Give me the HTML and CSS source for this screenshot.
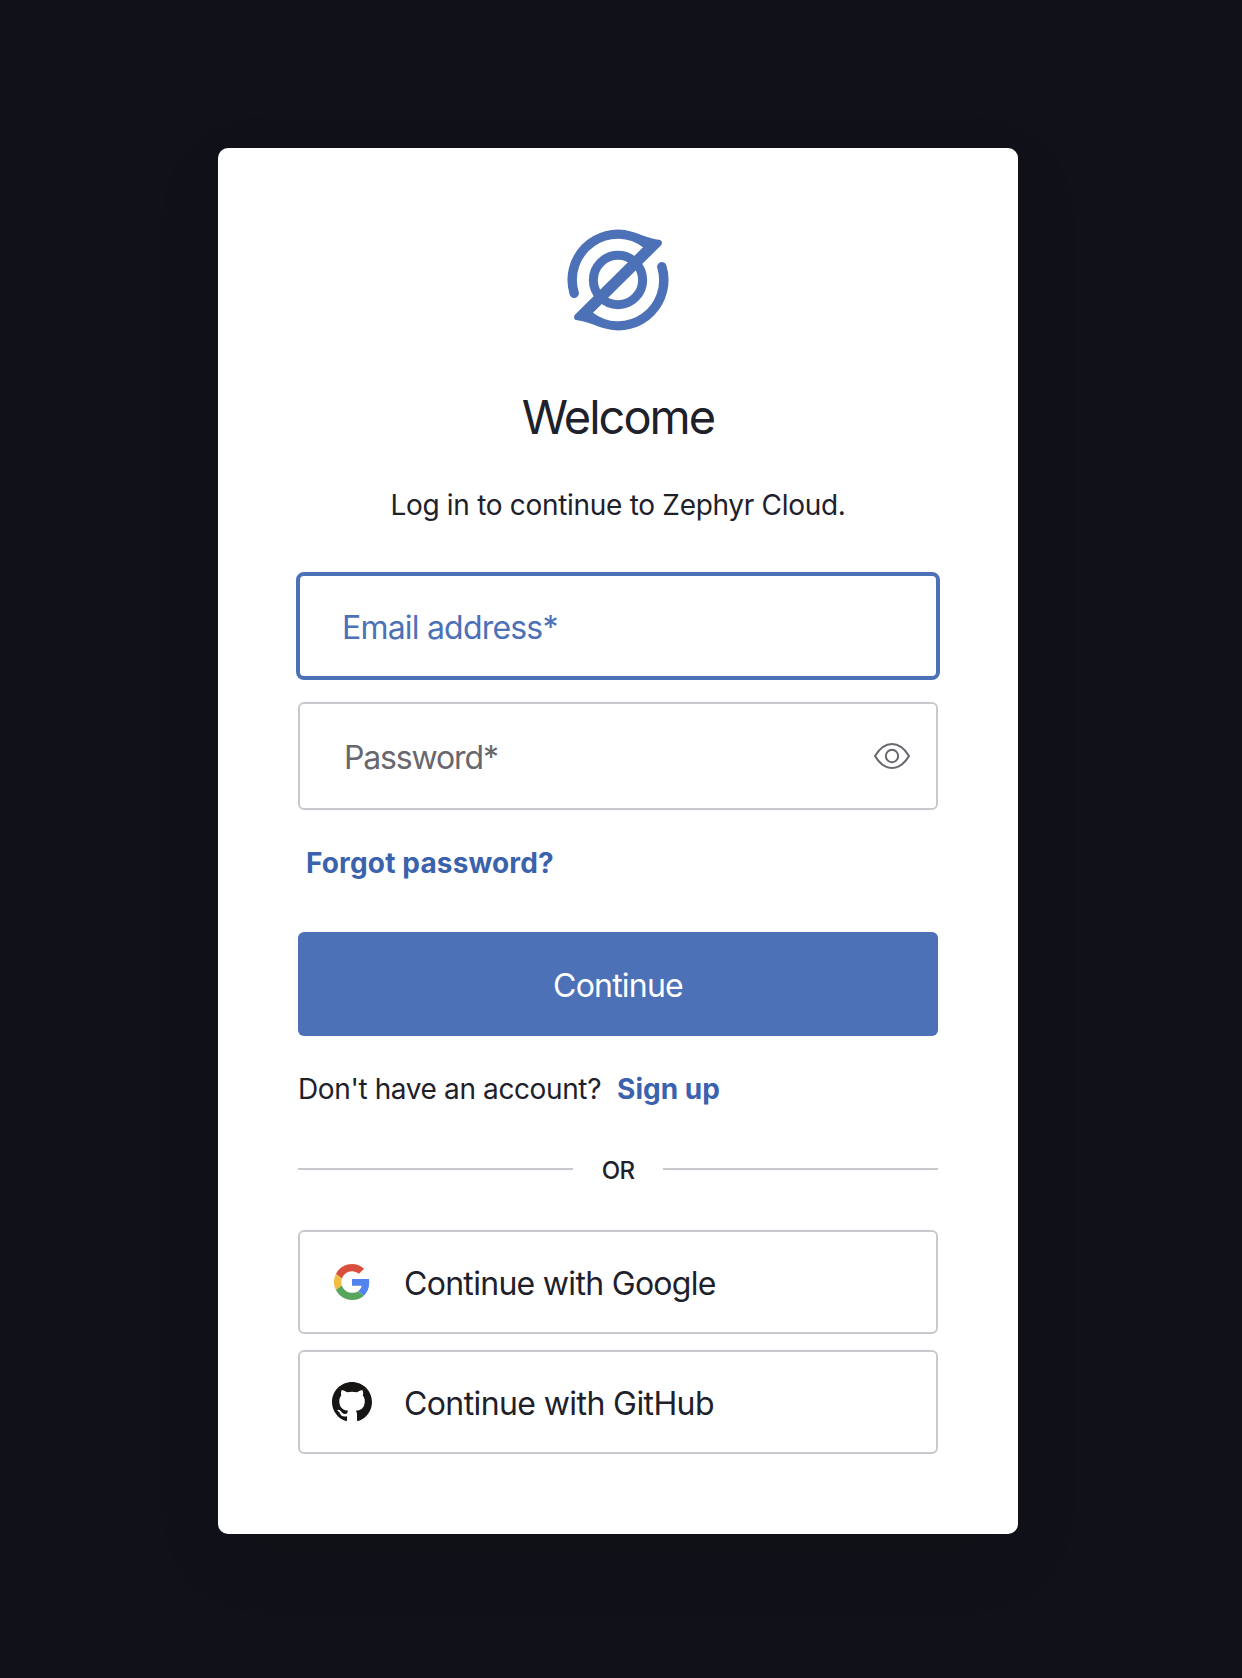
FILE: index.html
```html
<!DOCTYPE html>
<html lang="en">
<head>
<meta charset="utf-8">
<title>Log in | Zephyr Cloud</title>
<link rel="stylesheet" href="styles.css">
</head>
<body>
<main class="card">
  <svg class="logo" viewBox="54 54 312 312" aria-hidden="true">
    <circle cx="210" cy="210" r="74" fill="none" stroke="currentColor" stroke-width="27"/>
    <path fill="currentColor" d="M92 245A123 123 0 0 1 285 112L80 315Q74 329 88 331C125 337 140 347 168 355A151 151 0 0 0 355 166A13.5 13.5 0 0 0 328 175A123 123 0 0 1 135 308L340 105Q346 91 332 89C295 83 280 73 252 65A151 151 0 0 0 65 254A13.5 13.5 0 0 0 92 245Z"/>
  </svg>
  <h1 class="title">Welcome</h1>
  <p class="subtitle">Log in to continue to Zephyr Cloud.</p>
  <div class="field field-focus"><span class="label email-label">Email address*</span></div>
  <div class="field">
    <span class="label password-label">Password*</span>
    <svg class="eye" viewBox="102 156 108 84" aria-hidden="true">
      <g fill="none" stroke="currentColor" stroke-width="6" stroke-linejoin="round">
        <path d="M105 198C120 173 138 162 156 162S192 173 207 198C192 223 174 234 156 234S120 223 105 198Z"/>
        <circle cx="156" cy="198" r="18.5"/>
      </g>
    </svg>
  </div>
  <a class="link forgot">Forgot password?</a>
  <button class="submit"><span>Continue</span></button>
  <p class="signup"><span class="question">Don't have an account?</span><a class="link">Sign up</a></p>
  <div class="divider"><span class="or">OR</span></div>
  <button class="social">
    <svg class="google" viewBox="0 0 48 48" aria-hidden="true">
      <path fill="#d94f3d" d="M24 9.5c3.54 0 6.71 1.22 9.21 3.6l6.85-6.85C35.9 2.38 30.47 0 24 0 14.62 0 6.51 5.38 2.56 13.22l7.98 6.19C12.43 13.72 17.74 9.5 24 9.5z"/>
      <path fill="#5383ec" d="M46.98 24.55c0-1.57-.15-3.09-.38-4.55H24v9.02h12.94c-.58 2.96-2.26 5.48-4.78 7.18l7.73 6c4.51-4.18 7.09-10.36 7.09-17.65z"/>
      <path fill="#f2bd42" d="M10.53 28.59A14.5 14.5 0 0 1 10.53 19.41L2.56 13.22A23.9 23.9 0 0 0 2.56 34.78l7.97-6.19z"/>
      <path fill="#58a55c" d="M24 48c6.48 0 11.93-2.13 15.89-5.81l-7.73-6c-2.15 1.45-4.92 2.3-8.16 2.3-6.26 0-11.57-4.22-13.47-9.91l-7.98 6.19C6.51 42.62 14.62 48 24 48z"/>
    </svg>
    <span class="label">Continue with Google</span>
  </button>
  <button class="social">
    <svg class="github" viewBox="0 0 16 16" aria-hidden="true">
      <path fill="#161514" d="M8 0C3.58 0 0 3.58 0 8c0 3.54 2.29 6.53 5.47 7.59.4.07.55-.17.55-.38 0-.19-.01-.82-.01-1.49-2.01.37-2.53-.49-2.69-.94-.09-.23-.48-.94-.82-1.13-.28-.15-.68-.52-.01-.53.63-.01 1.08.58 1.23.82.72 1.21 1.87.87 2.33.66.07-.52.28-.87.51-1.07-1.78-.2-3.64-.89-3.64-3.95 0-.87.31-1.59.82-2.15-.08-.2-.36-1.02.08-2.12 0 0 .67-.21 2.2.82a7.6 7.6 0 0 1 4 0c1.53-1.04 2.2-.82 2.2-.82.44 1.1.16 1.92.08 2.12.51.56.82 1.27.82 2.15 0 3.07-1.87 3.75-3.65 3.95.29.25.54.73.54 1.48 0 1.07-.01 1.93-.01 2.2 0 .21.15.46.55.38A8.01 8.01 0 0 0 16 8c0-4.42-3.58-8-8-8z"/>
    </svg>
    <span class="label github-label">Continue with GitHub</span>
  </button>
</main>
</body>
</html>
```
FILE: styles.css
```css
* { box-sizing: border-box; }
body {
  margin: 0;
  min-height: 1678px;
  padding: 148px 224px 0 218px;
  background: #111219;
  color: #1e212a;
  font-family: Inter, "Liberation Sans", sans-serif;
}
.card {
  display: flex;
  flex-direction: column;
  width: 800px;
  height: 1386px;
  padding: 80px;
  background: #fff;
  border-radius: 10px;
  box-shadow: 0 24px 72px rgba(0, 0, 0, .08);
}
.logo { width: 104px; height: 104px; align-self: center; color: #4c71b7; }
.title {
  margin: 56px 0 0;
  font-size: 47px;
  font-weight: 400;
  line-height: 58px;
  text-align: center;
  letter-spacing: -2px;
}
.subtitle {
  margin: 38px 0 46px;
  font-size: 28px;
  line-height: 42px;
  text-align: center;
  letter-spacing: -.3px;
}
.field {
  display: flex;
  align-items: center;
  justify-content: space-between;
  height: 108px;
  padding: 0 26px 0 44px;
  border: 2px solid #c9c8ce;
  border-radius: 6px;
  color: #68676e;
  font-size: 32px;
}
.field-focus {
  margin: 0 -2px 22px;
  padding-left: 42px;
  border: 4px solid #4c71b7;
  border-radius: 8px;
  color: #4c71b7;
}
.label { padding-top: 2px; }
.email-label { letter-spacing: -.8px; }
.password-label { letter-spacing: -1.15px; }
.eye { width: 36px; height: 28px; }
.link { color: #3b62ad; font-weight: 700; }
.forgot {
  margin: 32px 0 48px 8px;
  font-size: 28px;
  line-height: 42px;
  letter-spacing: .15px;
}
.submit {
  height: 104px;
  padding: 2px 0 0;
  border: 0;
  border-radius: 6px;
  background: #4c71b7;
  color: #fff;
  font: 32px Inter, sans-serif;
  letter-spacing: -.8px;
}
.signup {
  display: flex;
  gap: 16px;
  margin: 32px 0 0;
  font-size: 28px;
  line-height: 42px;
}
.question { letter-spacing: -.38px; }
.divider {
  display: grid;
  grid-template-columns: 275px 90px 275px;
  align-items: center;
  height: 30px;
  margin: 45px 0;
}
.divider::before, .divider::after {
  content: "";
  height: 2px;
  margin-bottom: 2px;
  background: #c9c8ce;
}
.or {
  padding-top: 2px;
  font-size: 24px;
  font-weight: 500;
  line-height: 28px;
  text-align: center;
  letter-spacing: -.8px;
}
.social {
  display: flex;
  align-items: center;
  height: 104px;
  padding: 0 32px;
  border: 2px solid #c9c8ce;
  border-radius: 6px;
  background: #fff;
  color: #1e212a;
  font: 32px Inter, sans-serif;
  letter-spacing: -.7px;
}
.github-label { letter-spacing: -.6px; }
.social + .social { margin-top: 16px; }
.google { width: 36px; height: 36px; margin: 0 34px 0 2px; }
.github { width: 40px; height: 40px; margin-right: 32px; }
```
